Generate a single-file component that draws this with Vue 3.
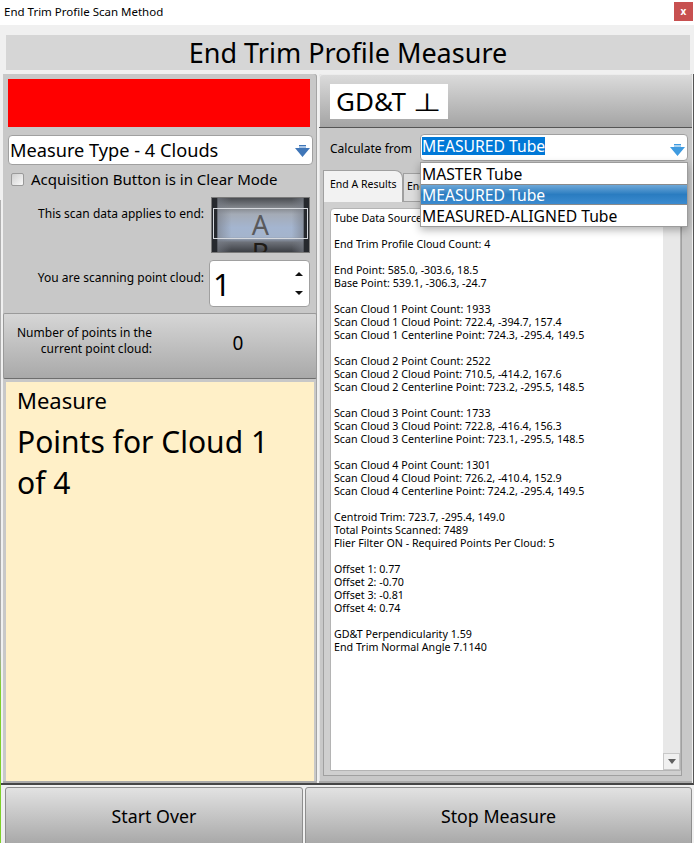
<template>
  <div class="window">
    <div class="edge"></div>
    <div class="titlebar">
      <span class="title-text">End Trim Profile Scan Method</span>
      <button class="close">x</button>
    </div>
    <div class="heading">End Trim Profile Measure</div>
    <div class="columns">
      <div class="left">
        <div class="left-top">
          <div class="status-red"></div>
          <div class="combo type-combo">
            <span>Measure Type - 4 Clouds</span>
            <svg class="arrow" viewBox="0 0 15 12"><path d="M0 3 H4 V0 H11 V3 H15 L7.5 12 Z" fill="#3f76b8"/><path d="M4 1 H11 V3 H4 Z" fill="#a9c4e4"/></svg>
          </div>
          <label class="check-row">
            <span class="check"></span>
            <span>Acquisition Button is in Clear Mode</span>
          </label>
          <div class="field-row end-row">
            <span class="field-label">This scan data applies to end:</span>
            <div class="tumbler">
              <span class="letter-a">A</span>
              <span class="letter-b">B</span>
              <div class="tumbler-band"></div>
            </div>
          </div>
          <div class="field-row cloud-row">
            <span class="field-label">You are scanning point cloud:</span>
            <div class="spin">
              <span class="spin-value">1</span>
              <div class="spin-arrows">
                <svg viewBox="0 0 8 4"><path d="M4 0 L8 4 H0 Z" fill="#111"/></svg>
                <svg viewBox="0 0 8 4"><path d="M0 0 H8 L4 4 Z" fill="#111"/></svg>
              </div>
            </div>
          </div>
        </div>
        <div class="points-box">
          <div class="points-label">Number of points in the<br />current point cloud:</div>
          <div class="points-value">0</div>
        </div>
        <div class="message">
          <div class="msg-small">Measure</div>
          <div class="msg-big">Points for Cloud 1<br />of 4</div>
        </div>
      </div>
      <div class="right">
        <div class="gdt-btn"><div class="gdt-label">GD&amp;T <span class="perp">⊥</span></div></div>
        <div class="calc-row">
          <span class="calc-label">Calculate from</span>
          <div class="combo calc-combo">
            <span class="selected">MEASURED Tube</span>
            <svg class="arrow" viewBox="0 0 15 12"><path d="M0 3 H4 V0 H11 V3 H15 L7.5 12 Z" fill="#3f9be0"/><path d="M4 1 H11 V3 H4 Z" fill="#a9d3f2"/></svg>
            <div class="popup">
              <div class="popup-item" v-for="o in options" :key="o" :class="{ on: o == 'MEASURED Tube' }">{{ o }}</div>
            </div>
          </div>
        </div>
        <div class="tabs">
          <div class="tab active">End A Results</div>
          <div class="tab">End B Results</div>
        </div>
        <div class="tab-pane">
          <div class="results">
            <div class="results-text">
              <div class="line" v-for="(l, i) in lines" :key="i">{{ l }}</div>
            </div>
            <div class="scrollbar">
              <div class="scroll-btn"><svg viewBox="0 0 8 5"><path d="M0 0 H8 L4 5 Z" fill="#606060"/></svg></div>
            </div>
          </div>
        </div>
      </div>
    </div>
    <div class="bottom">
      <button class="big-btn start">Start Over</button>
      <button class="big-btn stop">Stop Measure</button>
    </div>
  </div>
</template>

<script setup>
const options = ["MASTER Tube", "MEASURED Tube", "MEASURED-ALIGNED Tube"]

const lines = [
  "Tube Data Source: MEASURED Tube",
  "",
  "End Trim Profile Cloud Count: 4",
  "",
  "End Point: 585.0, -303.6, 18.5",
  "Base Point: 539.1, -306.3, -24.7",
  "",
  "Scan Cloud 1 Point Count: 1933",
  "Scan Cloud 1 Cloud Point: 722.4, -394.7, 157.4",
  "Scan Cloud 1 Centerline Point: 724.3, -295.4, 149.5",
  "",
  "Scan Cloud 2 Point Count: 2522",
  "Scan Cloud 2 Cloud Point: 710.5, -414.2, 167.6",
  "Scan Cloud 2 Centerline Point: 723.2, -295.5, 148.5",
  "",
  "Scan Cloud 3 Point Count: 1733",
  "Scan Cloud 3 Cloud Point: 722.8, -416.4, 156.3",
  "Scan Cloud 3 Centerline Point: 723.1, -295.5, 148.5",
  "",
  "Scan Cloud 4 Point Count: 1301",
  "Scan Cloud 4 Cloud Point: 726.2, -410.4, 152.9",
  "Scan Cloud 4 Centerline Point: 724.2, -295.4, 149.5",
  "",
  "Centroid Trim: 723.7, -295.4, 149.0",
  "Total Points Scanned: 7489",
  "Flier Filter ON - Required Points Per Cloud: 5",
  "",
  "Offset 1: 0.77",
  "Offset 2: -0.70",
  "Offset 3: -0.81",
  "Offset 4: 0.74",
  "",
  "GD&T Perpendicularity 1.59",
  "End Trim Normal Angle 7.1140",
]
</script>

<style>
html, body {
  margin: 0;
  background: #f0f0f0;
}
</style>

<style scoped>
.window {
  position: relative;
  width: 694px;
  height: 843px;
  display: flex;
  flex-direction: column;
  overflow: hidden;
  background: #f0f0f0;
  font-family: "Noto Sans", "DejaVu Sans", sans-serif;
  color: #000;
}
/* sliver of whatever is behind the window */
.edge {
  position: absolute;
  left: 0;
  top: 200px;
  bottom: 0;
  width: 1px;
  background: linear-gradient(180deg, #b0b0b0 0, #a8a8a8 70%, #7fd02a 76%, #7fd02a 100%);
}
.titlebar {
  height: 25px;
  flex: none;
  background: #fff;
  display: flex;
  align-items: center;
  justify-content: space-between;
  padding: 0 1px 0 4px;
}
.title-text {
  font-size: 11.5px;
  padding-bottom: 2px;
}
.close {
  width: 19px;
  height: 19px;
  margin-bottom: 3px;
  border: 0;
  padding: 0;
  background: #c75050;
  color: #fff;
  font: bold 10px "Noto Sans", sans-serif;
}
.heading {
  flex: none;
  height: 35px;
  margin: 10px 4px 0 6px;
  background: #d6d6d6;
  text-align: center;
  font-size: 27px;
  line-height: 36px;
}
.columns {
  flex: none;
  height: 709px;
  margin-top: 4px;
  padding: 0 1px 0 3px;
  display: flex;
  gap: 2px;
  border-bottom: 2px solid #454545;
  border-right: 1px solid #555;
}
.left {
  width: 314px;
  background: #c8c8c8;
  border-bottom: 2px solid #aaa;
  border-top-right-radius: 3px;
  box-shadow: inset -1px 0 #a4a4a4;
  display: flex;
  flex-direction: column;
  box-sizing: border-box;
}
.left-top {
  height: 239px;
  flex: none;
  padding: 5px 5px 0 5px;
  box-sizing: border-box;
}
.status-red {
  width: 302px;
  height: 48px;
  background: #ff0000;
}
.combo {
  position: relative;
  background: #fff;
  border: 1px solid #a0a0a0;
  border-radius: 4px;
  box-sizing: border-box;
  display: flex;
  align-items: center;
}
.type-combo {
  width: 305px;
  height: 30px;
  margin-top: 8px;
  padding-left: 1px;
  font-size: 18.2px;
}
.arrow {
  position: absolute;
  right: 2px;
  top: 9px;
  width: 15px;
  height: 12px;
}
.check-row {
  display: flex;
  align-items: center;
  gap: 7px;
  height: 24px;
  margin-top: 2px;
  padding-left: 3px;
  font-size: 15px;
}
.check {
  width: 11px;
  height: 11px;
  border: 1px solid #9a9a9a;
  border-radius: 2px;
  background: linear-gradient(135deg, #cfcfcf, #fafafa);
}
.field-row {
  display: flex;
  justify-content: flex-end;
  gap: 7px;
}
.field-label {
  font-size: 12px;
}
.end-row {
  margin-top: 6px;
  margin-right: 2px;
}
.end-row .field-label {
  margin-top: 8px;
}
.tumbler {
  position: relative;
  width: 99px;
  height: 56px;
  box-sizing: border-box;
  border: 1px solid #7a7a7a;
  overflow: hidden;
  background: linear-gradient(180deg, #4a4d52 0, #83878d 18%, #a4abb6 30%, #a4b5d0 55%, #a4b4cc 72%, #6d7179 82%, #3c3f44 100%);
}
.tumbler::before {
  content: "";
  position: absolute;
  inset: 0;
  background: linear-gradient(90deg, #26292e 0, #26292e 5%, rgba(120, 125, 135, 0.6) 6%, rgba(160, 170, 185, 0) 20%, rgba(160, 170, 185, 0) 82%, rgba(120, 125, 135, 0.6) 94%, #26292e 95%);
}
.tumbler-band {
  position: absolute;
  left: 1px;
  right: 1px;
  top: 10px;
  height: 31px;
  border: 1px solid #d6d9de;
  box-sizing: border-box;
}
.letter-a, .letter-b {
  position: absolute;
  left: 0;
  right: 0;
  text-align: center;
  font-size: 27px;
  line-height: 30px;
}
.letter-a {
  top: 12px;
  color: #5a5a5c;
}
.letter-b {
  top: 40px;
  color: #1f1b16;
}
.cloud-row {
  margin-top: 7px;
  margin-right: 2px;
  gap: 5px;
}
.cloud-row .field-label {
  margin-top: 9px;
}
.spin {
  position: relative;
  width: 101px;
  height: 47px;
  box-sizing: border-box;
  background: #fff;
  border: 1px solid #a0a0a0;
  border-radius: 4px;
  display: flex;
  align-items: center;
  padding-left: 3px;
}
.spin-value {
  font-size: 31px;
}
.spin-arrows {
  position: absolute;
  right: 6px;
  top: 11px;
  bottom: 11px;
  width: 8px;
  display: flex;
  flex-direction: column;
  justify-content: space-between;
}
.spin-arrows svg {
  width: 8px;
  height: 4px;
}
.points-box {
  flex: none;
  height: 66px;
  box-sizing: border-box;
  background: linear-gradient(180deg, #d6d6d6, #a9a9a9);
  border: 1px solid #9a9a9a;
  border-bottom-color: #6e6e6e;
  border-radius: 2px;
  display: flex;
  align-items: center;
  font-size: 12px;
}
.points-label {
  width: 148px;
  text-align: right;
  line-height: 16px;
  margin-bottom: 10px;
}
.points-value {
  width: 110px;
  margin-left: 31px;
  text-align: center;
  font-size: 19px;
  margin-bottom: 6px;
}
.message {
  flex: 1;
  margin: 3px 3px 0 3px;
  background: #fff0c8;
  padding: 3px 11px;
  box-sizing: border-box;
}
.msg-small {
  font-size: 22px;
  line-height: 30px;
}
.msg-big {
  font-size: 30px;
  line-height: 41px;
  margin-top: 6px;
}
.right {
  flex: 1;
  background: #c8c8c8;
  display: flex;
  flex-direction: column;
  border-bottom: 2px solid #aaa;
  border-top-left-radius: 3px;
  box-shadow: inset 1px 0 #e4e4e4;
  min-width: 0;
}
.gdt-btn {
  flex: none;
  height: 54px;
  box-sizing: border-box;
  padding: 10px 0 0 11px;
  background: linear-gradient(180deg, #dcdcdc, #a4a4a4);
  border-bottom: 1px solid #555;
  border-radius: 3px 3px 0 0;
  box-shadow: inset 1px 1px #ececec;
}
.gdt-label {
  width: 118px;
  height: 35px;
  background: #fff;
  font-size: 26px;
  line-height: 35px;
  padding-left: 6px;
  box-sizing: border-box;
  white-space: nowrap;
}
.perp {
  display: inline-block;
  font-family: "DejaVu Sans", sans-serif;
  font-size: 25px;
  transform: scaleX(1.3);
  transform-origin: left center;
}
.calc-row {
  flex: none;
  display: flex;
  align-items: center;
  height: 27px;
  margin-top: 6px;
  padding-left: 11px;
}
.calc-label {
  width: 90px;
  font-size: 12px;
  flex: none;
  padding-top: 2px;
}
.calc-combo {
  width: 268px;
  height: 27px;
  padding-left: 1px;
  font-size: 15.7px;
}
.selected {
  background: #0078d7;
  color: #fff;
  line-height: 18px;
  margin-top: -4px;
}
.popup {
  position: absolute;
  z-index: 5;
  left: -1px;
  top: 27px;
  width: 268px;
  box-sizing: border-box;
  background: #fff;
  border: 1px solid #9c9c9c;
  box-shadow: 0 3px 8px rgba(0, 0, 0, 0.3);
}
.popup-item {
  height: 21px;
  line-height: 23px;
  padding-left: 1px;
  font-size: 15.7px;
}
.popup-item.on {
  color: #fff;
  background: linear-gradient(180deg, #6ea8d8, #2a7cc0 50%, #3b8bd0);
  border-top: 1px solid #8a8a8a;
  border-bottom: 1px solid #8a8a8a;
  box-sizing: border-box;
  line-height: 21px;
}
.tabs {
  flex: none;
  display: flex;
  height: 31px;
  margin-top: 9px;
  padding-left: 4px;
  align-items: flex-end;
  position: relative;
  z-index: 1;
}
.tab {
  font-size: 10.5px;
  background: #dcdcdc;
  border: 1px solid #a0a0a0;
  border-bottom: 0;
  padding: 0 3px;
  height: 28px;
  line-height: 24px;
  box-sizing: border-box;
  white-space: nowrap;
}
.tab.active {
  background: #f2f2f2;
  height: 32px;
  line-height: 27px;
  width: 80px;
  padding: 0 6px;
  border-top-right-radius: 8px;
  margin-bottom: -1px;
}
.tab-pane {
  flex: 1;
  margin: 0 10px 5px 4px;
  padding: 6px 0 4px 6px;
  border: 1px solid #a0a0a0;
  background: #cfcfcf;
  min-height: 0;
}
.results {
  height: 100%;
  background: #fff;
  display: flex;
  border: 1px solid #b4b4b4;
  border-top-left-radius: 4px;
  box-sizing: border-box;
}
.results-text {
  flex: 1;
  padding: 3px 3px;
  font-size: 10.7px;
  line-height: 13px;
  white-space: nowrap;
  overflow: hidden;
}
.line {
  height: 13px;
}
.scrollbar {
  width: 17px;
  flex: none;
  background: #e8e8e8;
  display: flex;
  flex-direction: column;
  justify-content: flex-end;
}
.scroll-btn {
  height: 17px;
  background: #f0f0f0;
  border: 1px solid #c8c8c8;
  box-sizing: border-box;
  display: flex;
  align-items: center;
  justify-content: center;
}
.scroll-btn svg {
  width: 8px;
  height: 5px;
}
.bottom {
  flex: 1;
  display: flex;
  gap: 2px;
  padding: 2px 2px 0 5px;
}
.big-btn {
  height: 60px;
  background: linear-gradient(180deg, #e2e2e2, #a6a6a6);
  border: 1px solid #8e8e8e;
  border-radius: 3px;
  font-family: "Noto Sans", sans-serif;
  font-size: 17.8px;
  color: #000;
  padding: 0 0 2px 0;
}
.start {
  width: 298px;
}
.stop {
  width: 387px;
}
</style>
